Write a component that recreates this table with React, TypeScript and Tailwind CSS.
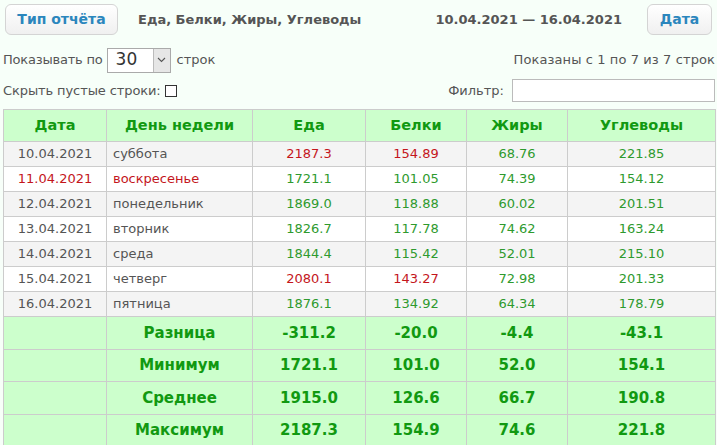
import React from 'react';

type Row = {
  date: string;
  day: string;
  food: string;
  prot: string;
  fat: string;
  carb: string;
  holiday?: boolean;
  hi?: ('food' | 'prot' | 'fat' | 'carb')[];
};

const rows: Row[] = [
  { date: '10.04.2021', day: 'суббота', food: '2187.3', prot: '154.89', fat: '68.76', carb: '221.85', hi: ['food', 'prot'] },
  { date: '11.04.2021', day: 'воскресенье', food: '1721.1', prot: '101.05', fat: '74.39', carb: '154.12', holiday: true },
  { date: '12.04.2021', day: 'понедельник', food: '1869.0', prot: '118.88', fat: '60.02', carb: '201.51' },
  { date: '13.04.2021', day: 'вторник', food: '1826.7', prot: '117.78', fat: '74.62', carb: '163.24' },
  { date: '14.04.2021', day: 'среда', food: '1844.4', prot: '115.42', fat: '52.01', carb: '215.10' },
  { date: '15.04.2021', day: 'четверг', food: '2080.1', prot: '143.27', fat: '72.98', carb: '201.33', hi: ['food', 'prot'] },
  { date: '16.04.2021', day: 'пятница', food: '1876.1', prot: '134.92', fat: '64.34', carb: '178.79' },
];

const totals = [
  ['Разница', '-311.2', '-20.0', '-4.4', '-43.1'],
  ['Минимум', '1721.1', '101.0', '52.0', '154.1'],
  ['Среднее', '1915.0', '126.6', '66.7', '190.8'],
  ['Максимум', '2187.3', '154.9', '74.6', '221.8'],
];

const Btn: React.FC<{ children: React.ReactNode; w: string }> = ({ children, w }) => (
  <button
    className={`${w} h-[31px] rounded-[6px] border border-[#d4d4d4] bg-gradient-to-b from-white to-[#f0f0f0] text-[14px] font-bold text-[#2b86bd]`}
  >
    {children}
  </button>
);

const App: React.FC = () => {
  const cell = 'border border-[#cccccc] text-center';
  const numColor = (r: Row, k: 'food' | 'prot' | 'fat' | 'carb') =>
    r.hi?.includes(k) ? 'text-[#c4161c]' : 'text-[#2e9a2e]';

  return (
    <div
      className="w-[717px] h-[445px] overflow-hidden bg-[#f7fff9] text-[13px] text-[#555555]"
      style={{ fontFamily: '"DejaVu Sans", Verdana, sans-serif' }}
    >
      {/* Top bar */}
      <div className="flex items-center pl-[5px] pr-[5px] pt-[3px] h-[36px]">
        <Btn w="w-[113px]">Тип отчёта</Btn>
        <span className="ml-[20px] font-bold text-[13px] text-[#555555]">Еда, Белки, Жиры, Углеводы</span>
        <span className="ml-auto mr-[25px] font-bold text-[13px] text-[#555555]">10.04.2021 — 16.04.2021</span>
        <Btn w="w-[65px]">Дата</Btn>
      </div>

      {/* Controls */}
      <div className="flex items-center justify-between pl-[3px] pr-[2px] mt-[11px] h-[26px]">
        <div className="flex items-center">
          <span className="tracking-[-0.2px]">Показывать по</span>
          <div className="ml-[4px] flex h-[25px] w-[64px] items-center border border-[#aaaaaa] bg-white">
            <span className="flex-1 pl-[8px] text-[17px] text-[#333333]">30</span>
            <span className="flex h-[23px] w-[17px] items-center justify-center border-l border-[#bbbbbb] bg-[#e6e6e6]">
              <svg width="9" height="6" viewBox="0 0 9 6">
                <path d="M1 1 L4.5 4.5 L8 1" fill="none" stroke="#555" strokeWidth="1.1" />
              </svg>
            </span>
          </div>
          <span className="ml-[6px]">строк</span>
        </div>
        <span className="tracking-[0.1px]">Показаны с 1 по 7 из 7 строк</span>
      </div>
      <div className="flex items-center justify-between pl-[3px] pr-[2px] mt-[6px] h-[23px]">
        <div className="flex items-center">
          <span className="tracking-[-0.1px]">Скрыть пустые строки:</span>
          <span className="ml-[4px] inline-block h-[12px] w-[12px] border border-[#333333] bg-white" />
        </div>
        <div className="flex items-center">
          <span>Фильтр:</span>
          <span className="ml-[8px] inline-block h-[23px] w-[203px] border border-[#bbbbbb] bg-white" />
        </div>
      </div>

      {/* Table */}
      <table className="ml-[3px] mt-[7px] w-[712px] table-fixed border-collapse">
        <colgroup>
          <col className="w-[103px]" />
          <col className="w-[146px]" />
          <col className="w-[113px]" />
          <col className="w-[101px]" />
          <col className="w-[101px]" />
          <col className="w-[148px]" />
        </colgroup>
        <thead>
          <tr className="h-[32px] bg-[#ccffcc] text-[14.5px] font-bold text-[#119911]">
            <th className={cell}>Дата</th>
            <th className={cell}>День недели</th>
            <th className={cell}>Еда</th>
            <th className={cell}>Белки</th>
            <th className={cell}>Жиры</th>
            <th className={cell}>Углеводы</th>
          </tr>
        </thead>
        <tbody>
          {rows.map((r, i) => (
            <tr key={r.date} className={`h-[25px] ${i % 2 === 0 ? 'bg-[#f4f4f4]' : 'bg-white'}`}>
              <td className={`${cell} ${r.holiday ? 'text-[#c4161c]' : ''}`}>{r.date}</td>
              <td className={`border border-[#cccccc] pl-[6px] text-left ${r.holiday ? 'text-[#c4161c]' : ''}`}>{r.day}</td>
              <td className={`${cell} ${numColor(r, 'food')}`}>{r.food}</td>
              <td className={`${cell} ${numColor(r, 'prot')}`}>{r.prot}</td>
              <td className={`${cell} ${numColor(r, 'fat')}`}>{r.fat}</td>
              <td className={`${cell} ${numColor(r, 'carb')}`}>{r.carb}</td>
            </tr>
          ))}
          {totals.map((t) => (
            <tr key={t[0]} className="h-[32.5px] bg-[#ccffcc] text-[15px] font-bold text-[#119911]">
              <td className={cell}></td>
              {t.map((v, j) => (
                <td key={j} className={cell}>
                  {v}
                </td>
              ))}
            </tr>
          ))}
        </tbody>
      </table>
    </div>
  );
};

export default App;
